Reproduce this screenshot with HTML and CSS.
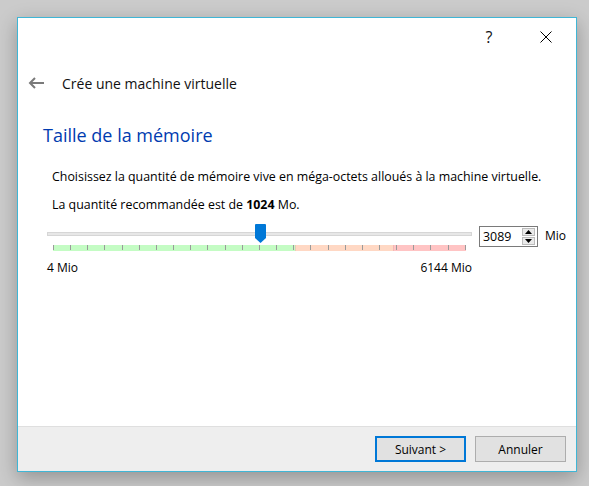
FILE: index.html
```html
<!DOCTYPE html>
<html lang="fr">
<head>
<meta charset="utf-8">
<title>Crée une machine virtuelle</title>
<link rel="stylesheet" href="styles.css">
</head>
<body>
<div class="window">
  <div class="titlebar">
    <span class="tb-btn help">?</span>
    <span class="tb-btn close">
      <svg width="12" height="12" viewBox="0 0 12 12"><path d="M0.5 0.5 L11.5 11.5 M11.5 0.5 L0.5 11.5" stroke="#000" stroke-width="1" fill="none"/></svg>
    </span>
  </div>
  <div class="header">
    <svg class="back" width="17" height="12" viewBox="0 0 17 12"><path d="M16 6 H2 M7 1 L2 6 L7 11" stroke="#7a7a7a" stroke-width="2" fill="none"/></svg>
    <span class="header-text">Crée une machine virtuelle</span>
  </div>
  <div class="content">
    <h1 class="page-title">Taille de la mémoire</h1>
    <p class="para first">Choisissez la quantité de mémoire vive en méga-octets alloués à la machine virtuelle.</p>
    <p class="para">La quantité recommandée est de <b>1024</b> Mo.</p>
    <div class="slider-row">
      <div class="slider">
        <div class="groove"></div>
        <div class="scale">
          <i></i><i></i><i></i><i></i><i></i><i></i><i></i><i></i><i></i><i></i><i></i><i></i><i></i><i></i><i></i><i></i><i></i><i></i><i></i><i></i><i></i><i></i><i></i><i></i><i></i>
        </div>
        <svg class="handle" width="11" height="19" viewBox="0 0 11 19"><path d="M0 1 Q0 0 1 0 H10 Q11 0 11 1 V14 L5.5 19 L0 14 Z" fill="#0078d7"/></svg>
        <div class="limits"><span>4 Mio</span><span>6144 Mio</span></div>
      </div>
      <div class="spinbox">
        <span class="spin-value">3089</span>
        <span class="spin-arrows">
          <span class="arrow-btn"><svg width="7" height="4" viewBox="0 0 7 4"><path d="M0 4 L3.5 0 L7 4 Z" fill="#000"/></svg></span>
          <span class="arrow-btn"><svg width="7" height="4" viewBox="0 0 7 4"><path d="M0 0 L3.5 4 L7 0 Z" fill="#000"/></svg></span>
        </span>
      </div>
      <span class="unit">Mio</span>
    </div>
  </div>
  <div class="footer">
    <button class="btn primary">Suivant &gt;</button>
    <button class="btn">Annuler</button>
  </div>
</div>
</body>
</html>
```
FILE: styles.css
```css
html, body {
  margin: 0;
  padding: 0;
}
body {
  width: 589px;
  height: 486px;
  overflow: hidden;
  background: #cbcbcb;
  font-family: "Open Sans", "Noto Sans", sans-serif;
  color: #000;
}
.window {
  margin: 17px 0 0 17px;
  width: 558px;
  height: 453px;
  border: 1px solid #3fb6d6;
  background: #fff;
  display: flex;
  flex-direction: column;
  box-shadow: 0 6px 18px rgba(0,0,0,0.28);
}
.titlebar {
  height: 38px;
  display: flex;
  justify-content: flex-end;
  align-items: center;
  padding-right: 7px;
}
.tb-btn {
  width: 46px;
  height: 30px;
  display: flex;
  align-items: center;
  justify-content: center;
}
.help {
  font-size: 16px;
  font-weight: 400;
  color: #111;
  margin-right: 11px;
}
.header {
  height: 54px;
  display: flex;
  align-items: center;
  padding-left: 10px;
}
.back {
  display: block;
}
.header-text {
  margin-left: 17px;
  font-size: 14px;
  color: #111;
}
.content {
  flex: 1;
  padding-top: 12px;
}
.page-title {
  margin: 0 0 0 25px;
  font-size: 18px;
  line-height: 26px;
  font-weight: 400;
  color: #003bb0;
}
.para {
  margin: 0 0 0 34px;
  font-size: 12.4px;
  line-height: 18px;
}
.para.first {
  margin-top: 20px;
  margin-bottom: 10px;
}
.para b {
  font-weight: 700;
}
.slider-row {
  margin: 10px 0 0 29px;
  display: flex;
  align-items: flex-start;
}
.slider {
  position: relative;
  width: 425px;
}
.groove {
  margin-top: 8px;
  height: 2px;
  background: #e7e7e7;
  border: 1px solid #d6d6d6;
}
.scale {
  margin: 9px 0 0 6px;
  width: 413px;
  height: 6px;
  display: flex;
  justify-content: space-between;
  align-items: flex-start;
  background: linear-gradient(to right, #c4fcc4 0, #c4fcc4 242px, #d4bca8 242px, #ffd8c4 243px, #ffd8c4 340px, #e8a8a8 340px, #ffc4c4 341px, #ffc4c4 100%);
}
.scale i {
  display: block;
  width: 1px;
  height: 5px;
  background: #9a9a9a;
}
.handle {
  position: absolute;
  left: 208px;
  top: 0;
}
.limits {
  margin-top: 9px;
  display: flex;
  justify-content: space-between;
  font-size: 12px;
  line-height: 16px;
}
.spinbox {
  margin: 2px 0 0 7px;
  width: 57px;
  height: 19px;
  border: 1px solid #7a7a7a;
  display: flex;
  align-items: center;
  justify-content: space-between;
  font-size: 12.4px;
}
.spin-value {
  padding-left: 3px;
}
.spin-arrows {
  display: flex;
  flex-direction: column;
  gap: 1px;
  margin-right: 2px;
}
.arrow-btn {
  width: 13px;
  height: 8px;
  background: #eaeaea;
  border: 1px solid #bcbcbc;
  box-sizing: border-box;
  display: flex;
  align-items: center;
  justify-content: center;
}
.arrow-btn svg {
  display: block;
}
.unit {
  margin: 4px 0 0 7px;
  font-size: 12px;
  line-height: 16px;
}
.footer {
  height: 45px;
  border-top: 1px solid #dfdfdf;
  background: #eeeeee;
  display: flex;
  justify-content: flex-end;
  align-items: flex-start;
  gap: 9px;
  padding: 9px 10px 0 0;
  box-sizing: border-box;
}
.btn {
  width: 91px;
  height: 26px;
  margin: 0;
  padding: 0;
  background: #e1e1e1;
  border: 1px solid #adadad;
  font-family: "Open Sans", "Noto Sans", sans-serif;
  font-size: 12px;
  color: #000;
}
.btn.primary {
  border: 2px solid #0078d7;
}
```
